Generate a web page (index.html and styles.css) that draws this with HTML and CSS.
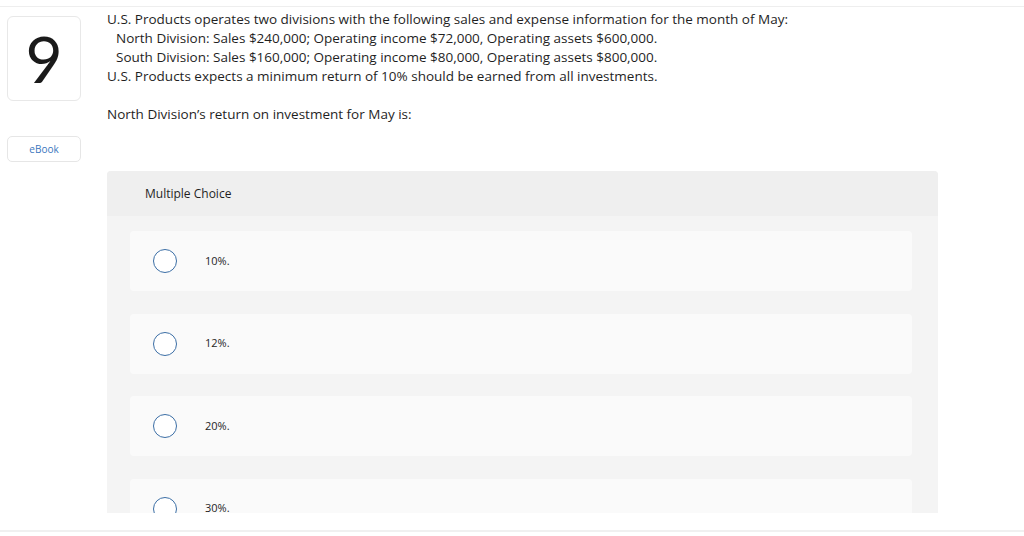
FILE: index.html
```html
<!DOCTYPE html>
<html>
<head>
<meta charset="utf-8">
<link rel="stylesheet" href="styles.css">
</head>
<body>
<div class="frame">
  <div class="content">
    <div class="side">
      <div class="qnum">9</div>
      <div class="ebook">eBook</div>
    </div>
    <div class="main">
      <div class="prompt">
        <p>U.S. Products operates two divisions with the following sales and expense information for the month of May:<br>
        <span class="ind">North Division: Sales $240,000; Operating income $72,000, Operating assets $600,000.</span><br>
        <span class="ind">South Division: Sales $160,000; Operating income $80,000, Operating assets $800,000.</span><br>
        U.S. Products expects a minimum return of 10% should be earned from all investments.</p>
        <p class="last">North Division’s return on investment for May is:</p>
      </div>
      <div class="panel">
        <div class="panel-head">Multiple Choice</div>
        <div class="panel-body">
          <div class="opt"><span class="radio"></span><span class="label">10%.</span></div>
          <div class="opt"><span class="radio"></span><span class="label">12%.</span></div>
          <div class="opt"><span class="radio"></span><span class="label">20%.</span></div>
          <div class="opt"><span class="radio"></span><span class="label">30%.</span></div>
        </div>
      </div>
    </div>
  </div>
</div>
</body>
</html>
```
FILE: styles.css
```css
html, body {
  margin: 0;
  padding: 0;
  background: #fff;
}
body {
  font-family: "Open Sans", Lato, Arial, sans-serif;
  color: #1f1f1f;
}
.frame {
  margin-top: 6px;
  border-top: 1px solid #eeeeee;
  border-bottom: 2px solid #f0f0f0;
  padding-bottom: 17px;
}
.content {
  height: 506px;
  overflow: hidden;
  display: flex;
}
.side {
  width: 74px;
  margin-left: 7px;
  flex: none;
}
.qnum {
  margin-top: 9px;
  height: 83px;
  border: 1px solid #e8e8e8;
  border-radius: 6px;
  display: flex;
  align-items: center;
  justify-content: center;
  font-family: Lato, "Open Sans", sans-serif;
  font-size: 64px;
  font-weight: 400;
  color: #1a1a1a;
  line-height: 1;
}
.ebook {
  margin-top: 35px;
  height: 24px;
  border: 1px solid #e6e6e6;
  border-radius: 5px;
  display: flex;
  align-items: center;
  justify-content: center;
  font-size: 10px;
  color: #3b77be;
}
.main {
  margin-left: 26px;
  width: 831px;
  flex: none;
}
.prompt {
  padding-top: 3px;
  font-size: 13.5px;
  line-height: 19px;
}
.prompt p {
  margin: 0 0 19px 0;
}
.prompt p.last {
  margin-bottom: 0;
}
.ind {
  padding-left: 9px;
}
.panel {
  margin-top: 47px;
  border-radius: 4px 4px 0 0;
  overflow: hidden;
  background: #f4f4f4;
}
.panel-head {
  height: 45px;
  background: #efefef;
  display: flex;
  align-items: center;
  padding-left: 38px;
  font-size: 12px;
}
.panel-body {
  padding: 15px 26px 40px 23px;
  display: flex;
  flex-direction: column;
  gap: 22.6px;
}
.opt {
  height: 60px;
  background: #fafafa;
  border-radius: 4px;
  display: flex;
  align-items: center;
  padding-left: 23px;
}
.radio {
  width: 22px;
  height: 22px;
  border: 1.3px solid #3b6ea5;
  border-radius: 50%;
  background: #fff;
  flex: none;
}
.label {
  margin-left: 28px;
  margin-bottom: 2px;
  font-size: 11px;
}
```
